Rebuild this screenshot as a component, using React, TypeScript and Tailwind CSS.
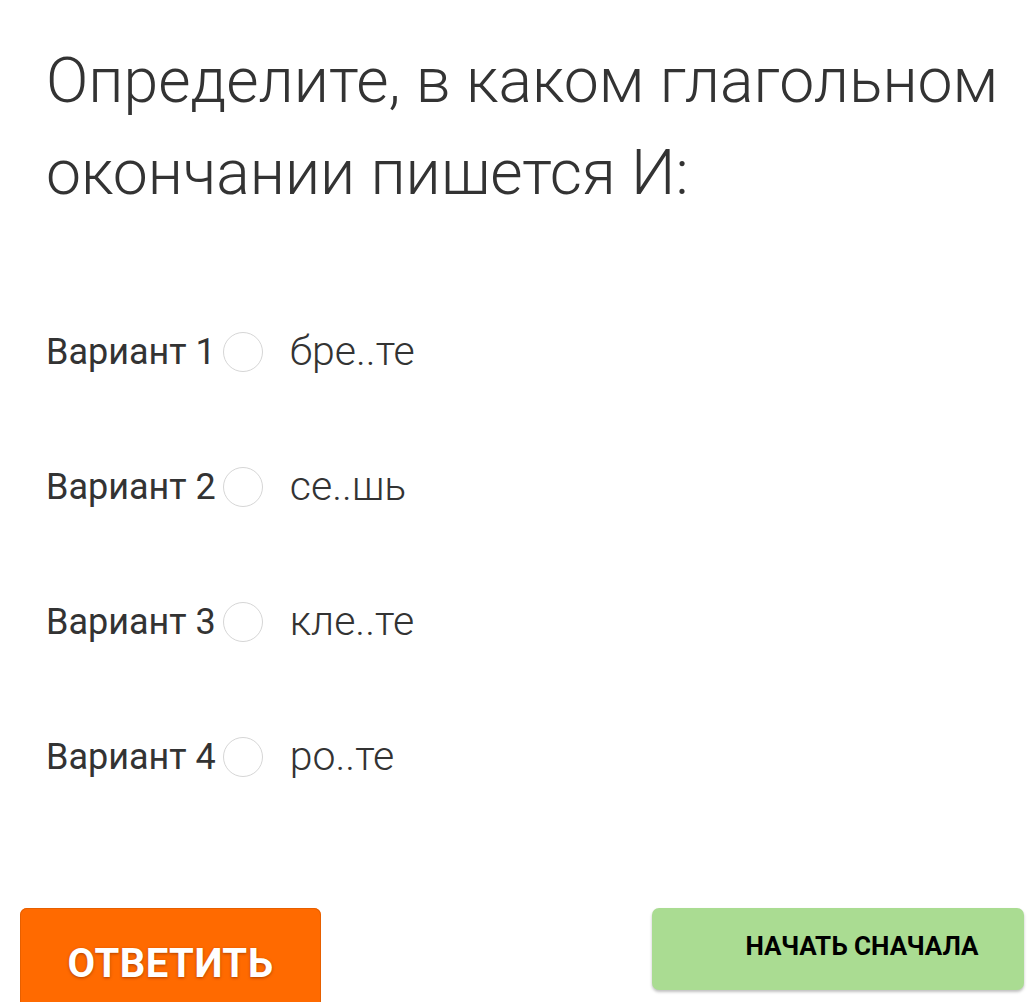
import React, { useState } from "react";

const options = [
  { id: 1, text: "бре..те" },
  { id: 2, text: "се..шь" },
  { id: 3, text: "кле..те" },
  { id: 4, text: "ро..те" },
];

const App: React.FC = () => {
  const [selected, setSelected] = useState<number | null>(null);

  return (
    <div
      className="h-[1002px] w-full overflow-hidden bg-white text-[#333]"
      style={{ fontFamily: "Roboto, 'Liberation Sans', sans-serif" }}
    >
      <div className="pl-[46px] pr-[8px] pt-[35px]">
        <h1 className="text-[62.5px] font-light leading-[92px] text-[#333]">
          Определите, в каком глагольном окончании пишется И:
        </h1>
      </div>

      <div className="mt-[113px] flex flex-col gap-[95px] px-[46px]">
        {options.map((o) => (
          <label key={o.id} className="flex h-[40px] cursor-pointer items-center">
            <span className="text-[36px] font-normal text-[#333]">Вариант {o.id}</span>
            <span className="ml-[7px] flex h-[40px] w-[40px] items-center justify-center rounded-full border border-[#d6d6d6] bg-white">
              {selected === o.id && <span className="h-[18px] w-[18px] rounded-full bg-[#ff6a00]" />}
            </span>
            <input
              type="radio"
              name="answer"
              className="hidden"
              checked={selected === o.id}
              onChange={() => setSelected(o.id)}
            />
            <span className="ml-[27px] text-[41px] font-light text-[#333]">{o.text}</span>
          </label>
        ))}
      </div>

      <div className="mt-[131px] flex items-start justify-between pl-[20px] pr-[4px]">
        <button className="flex h-[110px] w-[301px] items-start justify-center rounded-[7px] bg-[#ff6a00] pt-[26px] shadow-[inset_0_0_0_1px_#e65f00]">
          <span className="text-[40px] font-bold tracking-[0.5px] text-white [text-shadow:0_1px_3px_rgba(120,40,0,0.6)]">
            ОТВЕТИТЬ
          </span>
        </button>
        <button className="flex h-[82px] w-[372px] items-center justify-center rounded-[7px] bg-[#aadc92] pb-[6px] pl-[48px] shadow-[0_2px_3px_rgba(0,0,0,0.25)]">
          <span className="text-[26px] font-bold text-black">НАЧАТЬ СНАЧАЛА</span>
        </button>
      </div>
    </div>
  );
};

export default App;
